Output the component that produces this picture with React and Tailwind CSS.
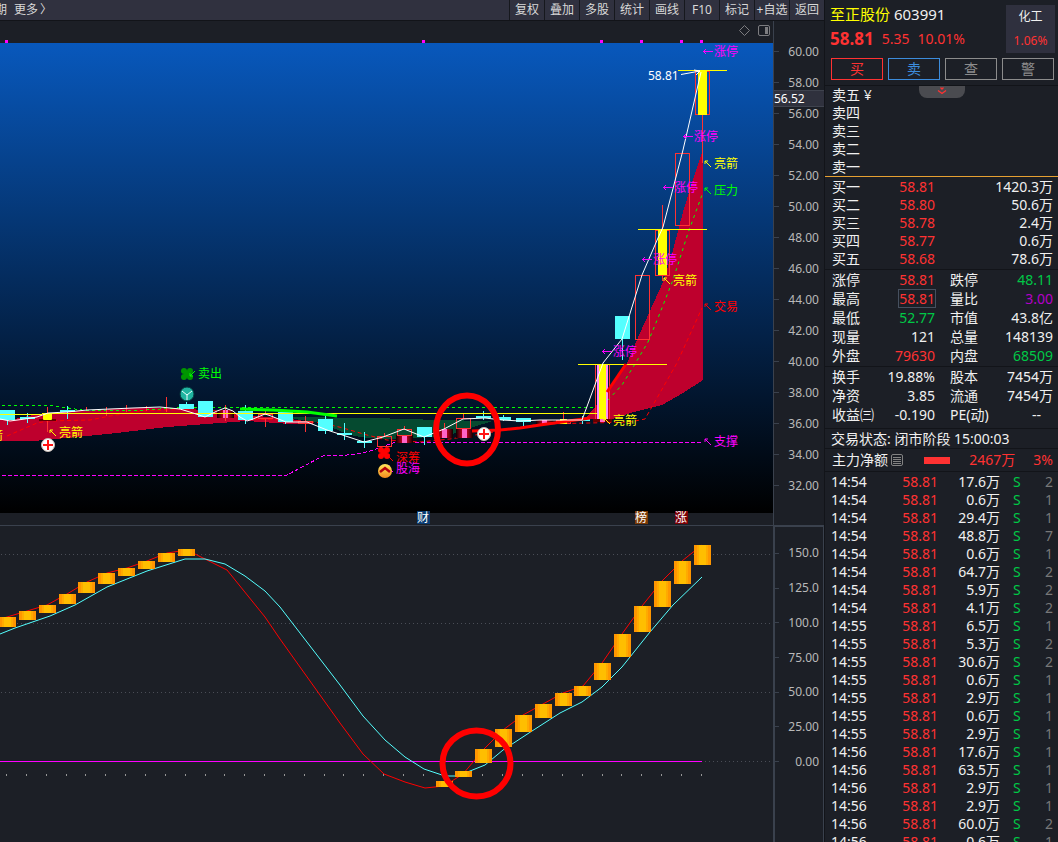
import React from "react";

const TOOLS = ["复权", "叠加", "多股", "统计", "画线", "F10", "标记", "+自选", "返回"];

const PRICE_TICKS = ["60.00", "58.00", "56.00", "54.00", "52.00", "50.00", "48.00", "46.00", "44.00", "42.00", "40.00", "38.00", "36.00", "34.00", "32.00"];
const OSC_TICKS = ["150.0", "125.0", "100.0", "75.00", "50.00", "25.00", "0.00"];

const ASKS = ["卖五", "卖四", "卖三", "卖二", "卖一"];
const BIDS = [
  ["买一", "58.81", "1420.3万"],
  ["买二", "58.80", "50.6万"],
  ["买三", "58.78", "2.4万"],
  ["买四", "58.77", "0.6万"],
  ["买五", "58.68", "78.6万"],
];

const RED = "text-[#ff3232]";
const GREEN = "text-[#00c846]";
const WHITE = "text-[#f0f0f0]";
const PURPLE = "text-[#b400c8]";

const STATS_A = [
  ["涨停", "58.81", RED, "跌停", "48.11", GREEN],
  ["最高", "58.81", RED, "量比", "3.00", PURPLE],
  ["最低", "52.77", GREEN, "市值", "43.8亿", WHITE],
  ["现量", "121", WHITE, "总量", "148139", WHITE],
  ["外盘", "79630", RED, "内盘", "68509", GREEN],
];
const STATS_B = [
  ["换手", "19.88%", WHITE, "股本", "7454万", WHITE],
  ["净资", "3.85", WHITE, "流通", "7454万", WHITE],
  ["收益㈢", "-0.190", WHITE, "PE(动)", "--", WHITE],
];

const TRADES = [
  ["14:54", "17.6万", 2], ["14:54", "0.6万", 1], ["14:54", "29.4万", 1], ["14:54", "48.8万", 7],
  ["14:54", "0.6万", 1], ["14:54", "64.7万", 2], ["14:54", "5.9万", 2], ["14:54", "4.1万", 2],
  ["14:55", "6.5万", 1], ["14:55", "5.3万", 2], ["14:55", "30.6万", 2], ["14:55", "0.6万", 1],
  ["14:55", "2.9万", 1], ["14:55", "0.6万", 1], ["14:55", "2.9万", 1], ["14:56", "17.6万", 1],
  ["14:56", "63.5万", 1], ["14:56", "2.9万", 1], ["14:56", "2.9万", 1], ["14:56", "60.0万", 2],
  ["14:56", "0.6万", 1],
];

/* Falling candles: x, top, bottom, wick top, wick bottom */
const DOWN = [
  [0, 410, 420, 410, 425], [20, 417, 419, 413, 423], [60, 410, 412, 406, 419], [179, 404, 409, 402, 409],
  [198, 401, 417, 401, 417], [238, 411, 420, 405, 424], [278, 412, 422, 412, 424], [318, 419, 431, 415, 434],
  [337, 433, 435, 423, 440], [357, 441, 443, 432, 448], [417, 427, 437, 427, 445], [476, 416, 418, 411, 420],
  [496, 417, 420, 415, 421], [516, 418, 422, 418, 426], [575, 419, 421, 416, 424], [615, 316, 339, 316, 360],
];
/* Rising candles: x, top, bottom, wick top, wick bottom */
const UP = [
  [258, 414, 418, 410, 414], [298, 421, 423, 416, 421], [377, 436, 446, 433, 436], [397, 429, 435, 426, 429],
  [456, 418, 428, 413, 418], [556, 420, 423, 412, 420], [595, 364, 419, 364, 364], [635, 275, 339, 275, 275],
  [655, 230, 275, 205, 230], [675, 153, 225, 153, 153], [695, 71, 114, 71, 71],
];
const GLOW = [[217, 410, 418], [396, 435, 443], [436, 429, 438], [456, 429, 438], [536, 420, 424]];
const WICKS = [
  [47, 407, 432], [86, 407, 410], [106, 407, 416], [126, 405, 412], [146, 406, 411], [166, 397, 412],
  [225, 405, 421], [265, 418, 427], [305, 423, 432], [444, 423, 429], [662, 275, 281], [702, 115, 163],
];
const YELLOW = [[599, 364, 419], [658, 229, 275], [698, 71, 115]];

const PRICE_LINE = "0,419 10,421 25,419 37,417 48,413 67,412 87,410 133,408 160,407 180,409 193,413 205,417 217,411 225,408 233,411 240,417 247,421 253,419 265,414 271,416 286,422 307,422 327,430 364,442 383,437 404,429 424,437 444,429 463,419 485,418 502,420 520,421 540,420 568,420 582,420 596,382 603,363 622,339 642,275 658,238 663,227 683,150 698,85 701,72";
const RED_AREA = "0,419 15,419 33,415 67,412 100,410 133,408 170,408 200,410 217,412 247,415 290,419 313,422 313,424 290,424 247,421 220,423 167,427 117,433 77,437 33,441 0,441";
const GREEN_AREA = "280,417 373,418 440,420 487,421 503,420 493,421 473,427 453,434 433,437 387,439 367,438 350,435 333,428 317,422";
const SURGE_AREA = "585,419 595,407 608,391 627,363 640,333 663,282 673,250 683,212 695,173 702,153 703,153 703,380 683,393 662,405 630,413 612,419";

const LIMIT_UP = [[703, 51], [683, 136], [663, 187], [642, 259], [602, 351]];
const MARKS = [
  [704, 163, "亮箭", "#ffff00"], [663, 280, "亮箭", "#ffff00"], [603, 420, "亮箭", "#ffff00"], [49, 432, "亮箭", "#ffff00"],
  [-31, 435, "亮箭", "#ffff00"], [704, 190, "压力", "#00ff00"], [704, 306, "交易", "#ff0000"], [704, 441, "支撑", "#ff00ff"],
  [386, 457, "深筹", "#ff0000"], [386, 468, "股海", "#ff00ff"],
];
const EVENTS = [[417, "财", "#083a70"], [635, "榜", "#7c3a06"], [675, "涨", "#7c0006"]];

const BARS = [
  [-1, 617, 627], [19, 611, 620], [39, 605, 613], [59, 594, 604], [78, 582, 593], [98, 573, 584], [118, 568, 576],
  [138, 561, 569], [158, 553, 562], [178, 549, 556], [436, 781, 787], [455, 771, 777], [475, 749, 763], [495, 729, 747],
  [515, 715, 732], [535, 704, 718], [555, 693, 706], [574, 686, 696], [594, 663, 680], [614, 634, 657], [634, 606, 632],
  [654, 581, 607], [674, 561, 584], [694, 545, 565],
];
const FAST_LINE = "0,619 7,617 27,611 47,605 67,594 87,582 107,573 127,568 147,561 167,553 187,550 195,554 205,559 227,570 265,617 280,639 340,723 363,754 384,774 405,782 425,788 444,786 463,774 484,749 503,730 523,715 543,704 563,693 583,686 602,663 622,634 642,606 662,581 682,561 702,545";
const SLOW_LINE = "0,634 15,628 50,616 75,605 107,587 147,571 185,559 205,559 225,564 245,576 265,591 280,607 340,685 363,716 385,740 405,757 424,769 445,776 455,776 465,773 485,765 503,750 532,731 560,713 582,702 602,687 622,667 650,632 673,605 702,577";

function Candle({ x, top, bottom, wickTop, wickBottom, rising }) {
  const color = rising ? "#ff3232" : "#54ffff";
  return (
    <g shapeRendering="crispEdges">
      <path d={`M${x + 7.5} ${wickTop}V${rising ? top : wickBottom}`} stroke={color} />
      {rising
        ? <rect x={x + 0.5} y={top + 0.5} width="14" height={bottom - top} fill="none" stroke={color} />
        : <rect x={x} y={top} width="15" height={bottom - top} fill={color} />}
    </g>
  );
}

function Clover({ x, y, color }) {
  return (
    <g fill={color}>
      <circle cx={x - 3} cy={y - 3} r="3" />
      <circle cx={x + 3} cy={y - 3} r="3" />
      <circle cx={x - 3} cy={y + 3} r="3" />
      <circle cx={x + 3} cy={y + 3} r="3" />
      <rect x={x - 3} y={y - 3} width="6" height="6" />
    </g>
  );
}

function PlusBadge({ x, y }) {
  return (
    <g>
      <circle cx={x} cy={y} r="6.5" fill="#fff" stroke="#c9bdb5" />
      <path d={`M${x - 5} ${y}h10M${x} ${y - 5}v10`} stroke="#ff1414" strokeWidth="2" />
    </g>
  );
}

function PriceChart() {
  return (
    <svg viewBox="0 40 773 485" preserveAspectRatio="none" className="block h-[485px] w-full text-[12px]" role="img" aria-label="K线图">
      <defs>
        <linearGradient id="sky" x1="0" y1="0" x2="0" y2="1">
          <stop offset="0" stopColor="#0858bc" />
          <stop offset="1" stopColor="#000000" />
        </linearGradient>
        <linearGradient id="glow">
          <stop offset="0" stopColor="#100000" />
          <stop offset="0.35" stopColor="#b4001e" />
          <stop offset="0.65" stopColor="#b4001e" />
          <stop offset="1" stopColor="#100000" />
        </linearGradient>
        <linearGradient id="gold" x1="0" y1="0" x2="0" y2="1">
          <stop offset="0" stopColor="#ffe85a" />
          <stop offset="1" stopColor="#f58a1e" />
        </linearGradient>
      </defs>
      <rect x="0" y="43" width="773" height="470" fill="url(#sky)" />
      {[5, 422, 600, 640, 680, 700].map((x) => <rect key={x} x={x} y="40" width="3" height="3" fill="#ff00ff" />)}

      <g shapeRendering="crispEdges">
        <polygon points={RED_AREA} fill="#be002d" />
        <polygon points={GREEN_AREA} fill="#054a30" />
        <polygon points={SURGE_AREA} fill="#be002d" />
      </g>
      <g fill="none">
        <polyline points="2,405.5 52,405.5 85,410.5 135,410.5 185,407.5 595,407.5" stroke="#00ff00" strokeDasharray="3 3" shapeRendering="crispEdges" />
        <polyline points="608,400 622,385 635,364 648,342 658,318 673,280 688,233 702,195" stroke="#00ff00" strokeDasharray="3 4" />
        <polyline points="2,475.5 286,475.5 323,456 347,455 363,453 373,450 393,443 403,442.5 702,442.5" stroke="#ff00ff" strokeDasharray="4 2" shapeRendering="crispEdges" />
        <polyline points="7,436 37,423 48,421 90,420 110,416 140,411 167,410 200,409 217,411 247,419 287,420 323,423 343,428 367,435 387,440 420,442 450,439 500,431 540,424 590,423 630,422 645,419 653,405 677,363 702,308" stroke="#ff0000" strokeDasharray="4 3" />
      </g>

      {GLOW.map(([x, t, b]) => (
        <g key={x + t}>
          <rect x={x} y={t} width="17" height={b - t} fill="url(#glow)" />
          <rect x={x + 6} y={t} width="5" height={b - t} fill="#ff64c8" />
        </g>
      ))}
      <g stroke="#ff3232" shapeRendering="crispEdges">
        {WICKS.map(([x, t, b]) => <path key={x} d={`M${x + 0.5} ${t}V${b}`} />)}
      </g>
      {DOWN.map(([x, t, b, wt, wb]) => <Candle key={x} x={x} top={t} bottom={b} wickTop={wt} wickBottom={wb} />)}
      {UP.map(([x, t, b, wt, wb]) => <Candle key={x} x={x} top={t} bottom={b} wickTop={wt} wickBottom={wb} rising />)}
      <rect x="39" y="419" width="17" height="2" fill="#640000" />
      <rect x="43" y="413" width="9" height="7" rx="1" fill="#ffff00" />
      <rect x="560" y="419" width="7" height="5" fill="#ffff00" />
      <g shapeRendering="crispEdges">
        <rect x="597" y="364" width="11" height="55" fill="#ff8cff" />
        <rect x="593" y="419" width="19" height="3" fill="#640000" />
        <rect x="600" y="419" width="5" height="3" fill="#ff64c8" />
        {YELLOW.map(([x, t, b]) => <rect key={x} x={x} y={t} width={x === 599 ? 7 : 9} height={b - t} fill="#ffff00" />)}
        <path d="M0 414.5h42M42 413.5H597M578 364.5h89M638 229.5h69M678 70.5h49" stroke="#ffff00" />
      </g>
      <g fill="none">
        <polyline points="240,409 273,410 307,412 337,416" stroke="#00ff00" strokeWidth="3" />
        <polyline points="472,431 500,430 520,428 540,425 590,418" stroke="#ff0000" strokeWidth="3" />
        <polyline points="607,392 626,364" stroke="#ff0000" strokeWidth="3" />
        <polyline points={PRICE_LINE} stroke="#ffffff" strokeWidth="1" />
        <path d="M681 74.500L700 71M694 70l6 1-4 4" stroke="#ffffff" />
      </g>

      {LIMIT_UP.map(([x, y]) => (
        <g key={y} fill="#ff00ff">
          <path d={`M${x} ${y + 0.5}h10M${x + 3} ${y - 2}l-2.500 2.500 2.500 2.500`} stroke="#ff00ff" fill="none" />
          <text x={x + 11} y={y + 5}>涨停</text>
        </g>
      ))}
      {MARKS.map(([x, y, label, color]) => (
        <g key={label + x + y} fill={color}>
          <path d={`M${x + 1} ${y - 2}l6 6M${x + 1} ${y + 1}v-3h3`} stroke={color} fill="none" />
          <text x={x + 10} y={y + 5}>{label}</text>
        </g>
      ))}
      <text x="648" y="80" fill="#ffffff">58.81</text>
      <Clover x={187} y={374} color="#009600" />
      <path d="M195 371l-5 5M190 373v3h3" stroke="#00ff00" fill="none" />
      <text x="198" y="378" fill="#00ff00">卖出</text>
      <circle cx="187" cy="394" r="7" fill="#20b4a0" stroke="#06373c" />
      <path d="M187 400v-6M182 391l5 4 5-4" stroke="#eaffff" fill="none" />
      <Clover x={384} y={453} color="#ff0000" />
      <circle cx="385" cy="471" r="7" fill="url(#gold)" />
      <path d="M380 472l5-4 5 4" stroke="#b4000a" strokeWidth="2.500" fill="none" />
      <PlusBadge x={48} y={445} />
      <PlusBadge x={484} y={434} />
      <ellipse cx="467" cy="429.500" rx="31" ry="34" fill="none" stroke="#ff0000" strokeWidth="6" />

      {EVENTS.map(([x, label, color]) => (
        <g key={label}>
          <rect x={x} y="511" width="13" height="13" fill={color} />
          <text x={x} y="522" fill="#ffffff">{label}</text>
        </g>
      ))}
    </svg>
  );
}

function OscillatorChart() {
  return (
    <svg viewBox="0 526 773 316" preserveAspectRatio="none" className="block h-full w-full" role="img" aria-label="指标图">
      <g stroke="#4a4d56" strokeDasharray="1 3" shapeRendering="crispEdges">
        {[554.5, 623.5, 692.5, 761.5].map((y) => <path key={y} d={`M1 ${y}H772`} />)}
      </g>
      <path d="M0 761.500H702" stroke="#ff00ff" shapeRendering="crispEdges" />
      {Array.from({ length: 36 }, (_, i) => (
        <rect key={i} x={Math.round(6 + i * 19.85)} y="774" width="1" height="2" fill="#969696" />
      ))}
      <polyline points={FAST_LINE} fill="none" stroke="#ff0000" />
      <polyline points={SLOW_LINE} fill="none" stroke="#54ffff" />
      {BARS.map(([x, t, b]) => (
        <g key={x} shapeRendering="crispEdges">
          <rect x={x} y={t} width="17" height={b - t} fill="#ff9600" />
          <rect x={x + 3} y={t} width="11" height={b - t} fill="#ffaa00" />
          <rect x={x + 5} y={t} width="7" height={b - t} fill="#ffbe00" />
        </g>
      ))}
      <ellipse cx="476.500" cy="763.500" rx="34" ry="33" fill="none" stroke="#ff0000" strokeWidth="6" />
    </svg>
  );
}

function StatRows({ rows }) {
  return (
    <table className="w-full table-fixed border-collapse">
      <tbody>
        {rows.map(([a, av, ac, b, bv, bc]) => (
          <tr key={a} className="h-[19px]">
            <th scope="row" className="w-[46px] whitespace-nowrap p-0 text-left font-normal">{a}</th>
            <td className={`w-[57px] p-0 text-right ${ac}`}>
              {a === "最高" ? <span className="inline-block leading-[17px] outline outline-[#46505f]">{av}</span> : av}
            </td>
            <th scope="row" className="w-[57px] whitespace-nowrap p-0 pl-[15px] text-left font-normal">{b}</th>
            <td className={`p-0 text-right ${bc} ${bv === "--" ? "pr-3" : ""}`}>{bv}</td>
          </tr>
        ))}
      </tbody>
    </table>
  );
}

function QuotePanel() {
  const action = "h-[22px] flex-1 border text-[14px] leading-[18px]";
  return (
    <aside className="flex w-[234px] shrink-0 flex-col border-l border-[#121419] text-[14px] leading-[18px] text-[#f0f0f0]">
      <header className="flex h-[58px] justify-between pl-[5px] pr-[3px] pt-[5px]">
        <div>
          <h1 className="text-[15px] leading-[18px]">
            <span className="text-[#ffff00]">至正股份</span> 603991
          </h1>
          <p className="mt-[5px] flex items-center gap-2 leading-[22px] text-[#ff3232]">
            <strong className="text-[17px]">58.81</strong>
            <span>5.35</span>
            <span>10.01%</span>
          </p>
        </div>
        <a href="#sector" className="flex h-12 w-[49px] flex-col items-center bg-[#2f303e] text-[12px]">
          <span className="pt-0.5 leading-[20px]">化工</span>
          <span className="pt-1 leading-[20px] text-[#ff3232]">1.06%</span>
        </a>
      </header>
      <div className="flex gap-[5px] pl-1.5 pr-1">
        <button className={`${action} border-[#ff3232] text-[#ff3232]`}>买</button>
        <button className={`${action} border-[#3c8cdc] text-[#3c8cdc]`}>卖</button>
        <button className={`${action} border-[#8c8c8c] text-[#8c8c8c]`}>查</button>
        <button className={`${action} border-[#8c8c8c] text-[#8c8c8c]`}>警</button>
      </div>

      <section className="relative mt-[5px] border-t border-[#121419]">
        <button aria-label="展开" className="absolute left-[94px] top-0 flex h-3 w-[46px] items-start justify-center rounded-b-lg bg-[#4a4b50]">
          <svg width="10" height="10" viewBox="0 0 10 10" fill="none" stroke="#ff3232" strokeWidth="1.300">
            <path d="M3.500 1.500L5 3l1.500-1.500M1 4.500l4 3 4-3" />
          </svg>
        </button>
        <ul className="border-b border-[#e6a032] pl-[7px]">
          {ASKS.map((a) => <li key={a} className="h-[18px]">{a}{a === "卖五" && " ¥"}</li>)}
        </ul>
      </section>
      <div className="border-b border-[#121419] pb-px pl-[7px] pr-[5px] pt-px">
        <table className="w-full table-fixed border-collapse">
          <tbody>
            {BIDS.map(([label, price, amount]) => (
              <tr key={label} className="h-[18px]">
                <th scope="row" className="w-[46px] p-0 text-left font-normal">{label}</th>
                <td className="w-[57px] p-0 text-right text-[#ff3232]">{price}</td>
                <td className="p-0 text-right">{amount}</td>
              </tr>
            ))}
          </tbody>
        </table>
      </div>
      <div className="border-b border-[#121419] pb-px pl-[7px] pr-[5px]">
        <StatRows rows={STATS_A} />
      </div>
      <div className="border-b border-[#121419] pb-1 pl-[7px] pr-[5px]">
        <StatRows rows={STATS_B} />
      </div>
      <p className="border-b border-[#121419] pl-1.5 leading-[19px]">交易状态: 闭市阶段 15:00:03</p>
      <div className="flex items-center border-b border-[#121419] pl-[7px] pr-[5px] leading-[22px]">
        <span>主力净额</span>
        <svg width="12" height="12" viewBox="0 0 12 12" className="ml-[3px]" fill="none" stroke="#828282">
          <rect x="0.500" y="0.500" width="11" height="11" rx="1.500" />
          <path d="M2 3.500h8M2 5.500h8M2 7.500h8M2 9.500h8" />
        </svg>
        <span className="ml-[21px] h-[7px] w-[26px] bg-[#ff3232]" />
        <span className="flex-1 pr-[18px] text-right text-[#ff3232]">2467万</span>
        <span className="text-[#ff3232]">3%</span>
      </div>
      <div className="min-h-0 flex-1 overflow-hidden pl-1.5 pr-[5px] pt-px">
        <table className="w-full table-fixed border-collapse">
          <tbody>
            {TRADES.map(([time, amount, count], i) => (
              <tr key={i} className="h-[18px]">
                <td className="w-[46px] p-0">{time}</td>
                <td className="w-[61px] p-0 text-right text-[#ff3232]">58.81</td>
                <td className="w-[62px] p-0 text-right">{amount}</td>
                <td className="w-[25px] p-0 pl-[13px] text-[#00c846]">S</td>
                <td className="p-0 text-right text-[#787878]">{count}</td>
              </tr>
            ))}
          </tbody>
        </table>
      </div>
    </aside>
  );
}

export default function App() {
  return (
    <div className="flex h-screen overflow-hidden bg-[#1c1f26] font-['Noto_Sans','Noto_Sans_CJK_SC',sans-serif]">
      <main className="flex min-w-0 flex-1 flex-col">
        <nav className="flex h-[21px] shrink-0 border-b border-[#121419] bg-[#30313f] text-[12px] leading-[20px] text-[#d8d8d8]">
          <div className="flex flex-1 overflow-hidden">
            <button className="-ml-[5px]">期</button>
            <button className="ml-[7px] flex gap-0.5"><span>更多</span><span>〉</span></button>
          </div>
          {TOOLS.map((t) => (
            <button key={t} className="w-[35px] whitespace-nowrap border-l border-[#16181d] text-center">{t}</button>
          ))}
        </nav>
        <div className="flex shrink-0">
          <div className="min-w-0 flex-1">
            <div className="flex h-[19px] items-center justify-end gap-2 pr-[3px] text-[#7d7d80]">
              <button aria-label="标记点">
                <svg width="11" height="11" viewBox="0 0 11 11" fill="none" stroke="currentColor"><path d="M5.500 0.500l5 5-5 5-5-5z" /></svg>
              </button>
              <button aria-label="侧栏">
                <svg width="12" height="12" viewBox="0 0 12 12" fill="none" stroke="currentColor">
                  <rect x="0.500" y="0.500" width="11" height="10" rx="1.500" />
                  <rect x="7" y="2" width="3" height="7" fill="currentColor" stroke="none" />
                </svg>
              </button>
            </div>
            <PriceChart />
          </div>
          <div className="relative w-[51px] border-l border-[#3a414d] pt-[15px] text-[12px] text-[#b9b9b9]">
            {PRICE_TICKS.map((t) => (
              <div key={t} className="flex h-[31px] items-center justify-between pr-[5px]">
                <span className="h-px w-[5px] bg-[#3a414d]" />
                <span>{t}</span>
              </div>
            ))}
            <div className="absolute inset-x-0 top-[69px] border-y border-[#3f434e] bg-[#2f313d] leading-[15px] text-white">56.52</div>
          </div>
        </div>
        <div className="flex min-h-0 flex-1">
          <div className="min-w-0 flex-1 border-t border-[#3a414d]">
            <OscillatorChart />
          </div>
          <div className="w-[51px] border-l-2 border-r border-t-2 border-[#3a414d] pt-[9px] text-[12px] text-[#b9b9b9]">
            <div className="flex h-[243px] flex-col justify-between">
              {OSC_TICKS.map((t) => (
                <div key={t} className="flex h-9 items-center justify-between pr-1">
                  <span className="h-px w-1 bg-[#3a414d]" />
                  <span>{t}</span>
                </div>
              ))}
            </div>
          </div>
        </div>
      </main>
      <QuotePanel />
    </div>
  );
}
